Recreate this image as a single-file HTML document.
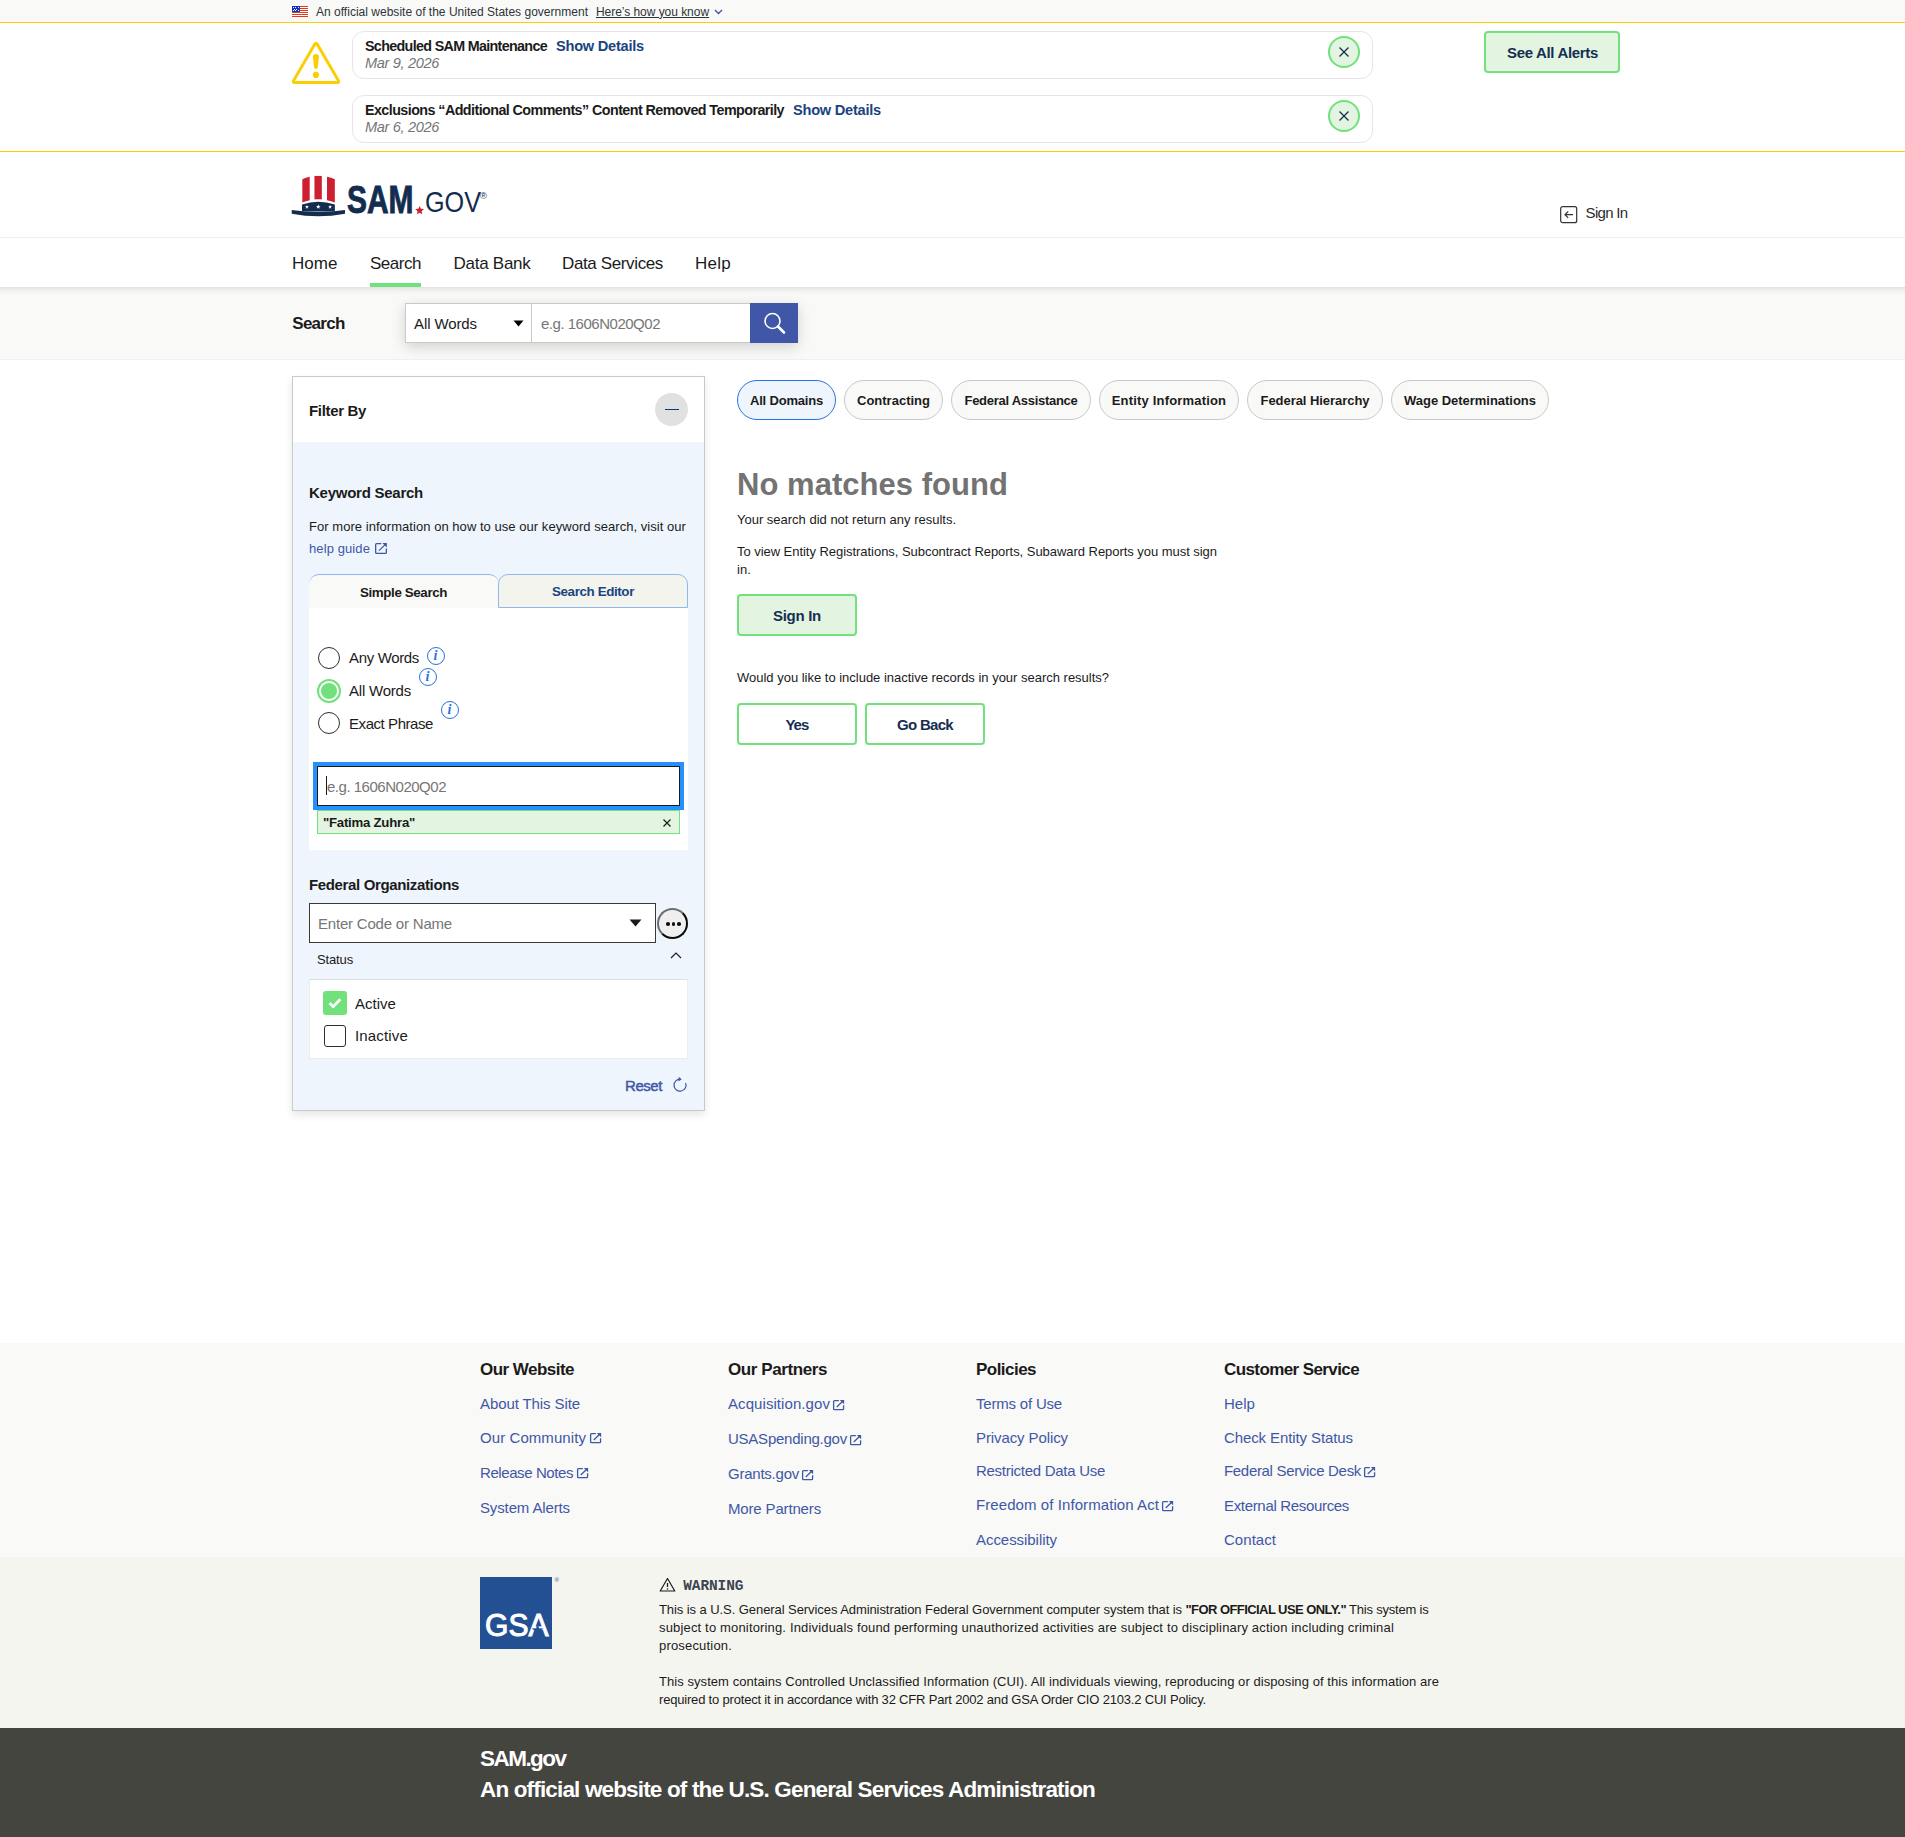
<!DOCTYPE html>
<html lang="en"><head><meta charset="utf-8"><title>SAM.gov | Search</title>
<style>
html,body{margin:0;padding:0;}
body{width:1905px;height:1837px;position:relative;overflow:hidden;background:#fff;font-family:"Liberation Sans", sans-serif;color:#1b1b1b;}
body *{position:absolute;box-sizing:border-box;margin:0;padding:0;}
.g{display:contents;}
a{color:inherit;text-decoration:none;}
h1,h2,h3,h4{font-weight:400;}
button{border:0;background:none;font:inherit;color:inherit;}
ul{list-style:none;}
.t{white-space:pre;line-height:1;display:block;}
svg{display:block;overflow:visible;}
</style></head>
<body>
<section class="g" aria-label="Official government website">
<div style="left:0px;top:0px;width:1905px;height:22px;background:#f9f9f7;"></div>
<svg aria-hidden="true" style="left:292px;top:6px;shape-rendering:crispEdges;" width="16" height="11" viewBox="0 0 16 11"><rect width="16" height="11" fill="#fff"/><rect y="0" width="16" height="1" fill="#e03c1c"/><rect y="2" width="16" height="1" fill="#e03c1c"/><rect y="4" width="16" height="1" fill="#e03c1c"/><rect y="6" width="16" height="1" fill="#e03c1c"/><rect y="8" width="16" height="1" fill="#e03c1c"/><rect y="10" width="16" height="1" fill="#e03c1c"/><rect width="7.6" height="6" fill="#1c2fb8"/><rect x="1" y="0.8" width="1" height="1" fill="#fff"/><rect x="3.3" y="0.8" width="1" height="1" fill="#fff"/><rect x="5.6" y="0.8" width="1" height="1" fill="#fff"/><rect x="2.1" y="2.5" width="1" height="1" fill="#fff"/><rect x="4.4" y="2.5" width="1" height="1" fill="#fff"/><rect x="1" y="4.2" width="1" height="1" fill="#fff"/><rect x="3.3" y="4.2" width="1" height="1" fill="#fff"/><rect x="5.6" y="4.2" width="1" height="1" fill="#fff"/></svg>
<p class="t" style="left:316px;top:5.84px;font-size:12px;color:#2f3338;letter-spacing:0.014px;">An official website of the United States government</p>
<button class="t" type="button" style="left:596px;top:5.84px;font-size:12px;color:#2f3338;text-decoration:underline;letter-spacing:-0.044px;">Here’s how you know</button>
<svg aria-hidden="true" style="left:714px;top:9px;" width="9" height="6" viewBox="0 0 9 6"><path d="M1 1L4.5 4.5L8 1" fill="none" stroke="#3f57a6" stroke-width="1.4"/></svg>
<div style="left:0px;top:22px;width:1905px;height:1px;background:#face00;"></div>
</section>
<section class="g" aria-label="Site alerts">
<svg aria-hidden="true" style="left:285px;top:35px;" width="60" height="55" viewBox="0 0 60 55"><path d="M31 9.6L52.3 46.3H9.7Z" fill="#face00" stroke="#face00" stroke-width="5.6" stroke-linejoin="round"/><path d="M31 10L51.95 46.1H10.05Z" fill="#fff"/><path d="M27.9 22A3 3 0 0 1 33.9 22L32.7 32.2A1.8 1.8 0 0 1 29.1 32.2Z" fill="#face00"/><circle cx="30.9" cy="39.9" r="3.1" fill="#face00"/></svg>
<article class="g">
<div style="left:352px;top:31px;width:1021px;height:48px;border:1px solid #e6e6e6;border-radius:12px;background:#fff;"></div>
<h3 class="t" style="left:365px;top:38.90px;font-size:14.3px;font-weight:700;letter-spacing:-0.664px;">Scheduled SAM Maintenance</h3>
<a class="t" style="left:556px;top:38.64px;font-size:14.6px;font-weight:700;color:#1a4480;letter-spacing:-0.236px;">Show Details</a>
<time class="t" style="left:365px;top:56.14px;font-size:14.6px;color:#71767a;font-style:italic;letter-spacing:-0.354px;">Mar 9, 2026</time>
<button type="button" aria-label="Dismiss alert" style="left:1328px;top:36px;width:32px;height:32px;border:2px solid #70e17b;border-radius:50%;background:#e3f5e1;"></button>
<svg aria-hidden="true" style="left:1339px;top:47px;" width="10" height="10" viewBox="0 0 10 10"><path d="M0.5 0.5L9.5 9.5M9.5 0.5L0.5 9.5" stroke="#162e51" stroke-width="1.3"/></svg>
</article>
<article class="g">
<div style="left:352px;top:95px;width:1021px;height:48px;border:1px solid #e6e6e6;border-radius:12px;background:#fff;"></div>
<h3 class="t" style="left:365px;top:102.90px;font-size:14.3px;font-weight:700;letter-spacing:-0.559px;">Exclusions “Additional Comments” Content Removed Temporarily</h3>
<a class="t" style="left:793px;top:102.64px;font-size:14.6px;font-weight:700;color:#1a4480;letter-spacing:-0.236px;">Show Details</a>
<time class="t" style="left:365px;top:120.14px;font-size:14.6px;color:#71767a;font-style:italic;letter-spacing:-0.354px;">Mar 6, 2026</time>
<button type="button" aria-label="Dismiss alert" style="left:1328px;top:100px;width:32px;height:32px;border:2px solid #70e17b;border-radius:50%;background:#e3f5e1;"></button>
<svg aria-hidden="true" style="left:1339px;top:111px;" width="10" height="10" viewBox="0 0 10 10"><path d="M0.5 0.5L9.5 9.5M9.5 0.5L0.5 9.5" stroke="#162e51" stroke-width="1.3"/></svg>
</article>
<button type="button" aria-label="See All Alerts" style="left:1484px;top:31px;width:136px;height:42px;border:2px solid #70e17b;border-radius:4px;background:#e3f5e1;"></button>
<span class="t" style="left:1507px;top:45.30px;font-size:15px;font-weight:700;color:#162e51;letter-spacing:-0.329px;">See All Alerts</span>
<div style="left:0px;top:151px;width:1905px;height:1px;background:#face00;"></div>
</section>
<header class="g">
<svg aria-hidden="true" style="left:286px;top:168px;" width="210" height="56" viewBox="0 0 210 56"><g transform="scale(0.11024)"><path d="M148,102Q180,86 215,80V292Q180,298 148,312Z" fill="#cc2030"/><path d="M258,72H325V284H258Z" fill="#cc2030"/><path d="M372,80Q410,86 443,102V312Q410,298 372,292Z" fill="#cc2030"/><path d="M145,330Q293,282 443,330V395H145Z" fill="#132d50"/><path d="M52,380Q293,416 535,380V414Q293,460 52,414Z" fill="#132d50"/><path d="M190.0,335.0L194.5,347.9L208.1,348.1L197.2,356.3L201.2,369.4L190.0,361.6L178.8,369.4L182.8,356.3L171.9,348.1L185.5,347.9ZM293.0,329.0L298.4,344.6L314.9,344.9L301.7,354.8L306.5,370.6L293.0,361.2L279.5,370.6L284.3,354.8L271.1,344.9L287.6,344.6ZM400.0,335.0L404.5,347.9L418.1,348.1L407.2,356.3L411.2,369.4L400.0,361.6L388.8,369.4L392.8,356.3L381.9,348.1L395.5,347.9Z" fill="#fff"/><path d="M1212.0,344.0L1223.2,370.6L1251.9,373.0L1230.1,391.9L1236.7,420.0L1212.0,405.0L1187.3,420.0L1193.9,391.9L1172.1,373.0L1200.8,370.6Z" fill="#cc2030"/></g></svg>
<span class="t" style="left:347px;top:180.53px;font-size:38px;font-weight:700;color:#132d50;-webkit-text-stroke:0.9px #132d50;transform:scaleX(0.7874);transform-origin:0 0;">SAM</span>
<span class="t" style="left:425px;top:188.15px;font-size:29px;color:#132d50;transform:scaleX(0.8686);transform-origin:0 0;">GOV</span>
<span class="t" style="left:480.3px;top:191.98px;font-size:9px;color:#132d50;transform:scaleX(1.0541);transform-origin:0 0;">®</span>
<svg aria-hidden="true" style="left:1560px;top:206px;" width="18" height="18" viewBox="0 0 18 18"><rect x="0.7" y="0.7" width="16" height="16" rx="2" fill="none" stroke="#333" stroke-width="1.2"/><path d="M13 8.7H5M8.2 5.5L5 8.7L8.2 11.9" fill="none" stroke="#333" stroke-width="1.2"/></svg>
<a class="t" style="left:1585.6px;top:205.30px;font-size:15px;color:#2a2a2a;letter-spacing:-0.700px;">Sign In</a>
<div style="left:0px;top:237px;width:1905px;height:1px;background:#f0f0f0;"></div>
<nav class="g" aria-label="Primary">
<a class="t" style="left:292px;top:254.61px;font-size:17px;letter-spacing:0.035px;">Home</a>
<a class="t" style="left:370px;top:254.61px;font-size:17px;letter-spacing:-0.479px;">Search</a>
<a class="t" style="left:453.5px;top:254.61px;font-size:17px;letter-spacing:-0.266px;">Data Bank</a>
<a class="t" style="left:562px;top:254.61px;font-size:17px;letter-spacing:-0.371px;">Data Services</a>
<a class="t" style="left:695px;top:254.61px;font-size:17px;letter-spacing:0.258px;">Help</a>
<div style="left:370px;top:283px;width:51px;height:4px;background:#70e17b;"></div>
</nav>
</header>
<form class="g" role="search">
<div style="left:0px;top:287px;width:1905px;height:72px;background:#f9f9f7;box-shadow:inset 0 8px 8px -8px rgba(0,0,0,.18);"></div>
<div style="left:0px;top:359px;width:1905px;height:1px;background:#f0f0f0;"></div>
<label class="t" style="left:292.3px;top:314.61px;font-size:17px;font-weight:700;letter-spacing:-0.734px;">Search</label>
<div style="left:405px;top:303px;width:393px;height:40px;box-shadow:0 4px 14px rgba(0,0,0,.16);background:#fff;"></div>
<div style="left:405px;top:303px;width:127px;height:40px;border:1px solid #c9c9c9;background:#fff;"></div>
<span class="t" style="left:414px;top:316.30px;font-size:15px;letter-spacing:-0.101px;">All Words</span>
<svg aria-hidden="true" style="left:513px;top:320px;" width="11" height="7" viewBox="0 0 11 7"><path d="M0.5 0.5H10.5L5.5 6.5Z" fill="#000"/></svg>
<div style="left:531px;top:303px;width:220px;height:40px;border:1px solid #c9c9c9;background:#fff;"></div>
<span class="t" style="left:541px;top:316.30px;font-size:15px;color:#767676;letter-spacing:-0.486px;">e.g. 1606N020Q02</span>
<button type="button" aria-label="Search" style="left:750px;top:303px;width:48px;height:40px;background:#3f57a6;"></button>
<svg aria-hidden="true" style="left:762px;top:311px;" width="24" height="24" viewBox="0 0 24 24"><circle cx="10.5" cy="10" r="7.5" fill="none" stroke="#fff" stroke-width="1.6"/><path d="M16 15.5L22 21.5" stroke="#fff" stroke-width="2.6" stroke-linecap="round"/></svg>
</form>
<main class="g">
<aside class="g" aria-label="Filters">
<div style="left:292px;top:376px;width:413px;height:735px;border:1px solid #c9c9c9;background:#eef5fc;box-shadow:0 4px 8px rgba(0,0,0,.10);"></div>
<div style="left:293px;top:377px;width:411px;height:65px;background:#fff;"></div>
<h2 class="t" style="left:309px;top:403.30px;font-size:15px;font-weight:700;letter-spacing:-0.335px;">Filter By</h2>
<button type="button" aria-label="Collapse filters" style="left:655px;top:393px;width:33px;height:33px;border-radius:50%;background:#e1e1e1;"></button>
<div style="left:665px;top:408.5px;width:14px;height:1.4px;background:#123a70;"></div>
<h3 class="t" style="left:309px;top:485.00px;font-size:15px;font-weight:700;letter-spacing:-0.253px;">Keyword Search</h3>
<p class="t" style="left:309px;top:520.00px;font-size:13px;letter-spacing:0.042px;">For more information on how to use our keyword search, visit our</p>
<a class="t" style="left:309px;top:542.00px;font-size:13px;color:#3f57a6;letter-spacing:0.100px;">help guide</a>
<svg aria-hidden="true" style="left:375.1px;top:543px;" width="12" height="12" viewBox="0 0 12 12"><path d="M6.3 .65H1.6Q.65 .65 .65 1.6V9.4Q.65 10.35 1.6 10.35H10.4Q11.35 10.35 11.35 9.4V5.6" fill="none" stroke="#3f57a6" stroke-width="1.3"/><path d="M4 7.6L10.4 1.4" fill="none" stroke="#3f57a6" stroke-width="1.3"/><path d="M7.3 0H11.9V4.6Z" fill="#3f57a6"/></svg>
<div style="left:309px;top:574px;width:190px;height:34px;border-top:1px solid #8fb8ee;border-radius:10px 10px 0 0;background:#f9f9f7;"></div>
<div style="left:498px;top:574px;width:190px;height:34px;border:1px solid #8fb8ee;border-radius:10px 10px 0 0;background:#f4f4ef;"></div>
<span class="t" style="left:360px;top:585.66px;font-size:13.4px;font-weight:700;letter-spacing:-0.407px;">Simple Search</span>
<span class="t" style="left:552px;top:584.66px;font-size:13.4px;font-weight:700;color:#1a4480;letter-spacing:-0.391px;">Search Editor</span>
<div style="left:309px;top:608px;width:379px;height:242px;background:#fff;"></div>
<div style="left:318px;top:647px;width:22px;height:22px;border-radius:50%;border:1.5px solid #2e2e2a;background:#fff;"></div>
<label class="t" style="left:349px;top:650.30px;font-size:15px;letter-spacing:-0.344px;">Any Words</label>
<div style="left:427px;top:647px;width:18px;height:18px;border-radius:50%;border:1.5px solid #2672de;"></div>
<span class="t" style="left:433.6px;top:648.95px;font-size:14px;font-weight:700;color:#2672de;font-style:italic;font-family:'Liberation Serif',serif;">i</span>
<div style="left:317px;top:679px;width:24px;height:24px;border-radius:50%;background:#70e17b;"></div>
<div style="left:319px;top:681px;width:20px;height:20px;border-radius:50%;background:#fff;"></div>
<div style="left:321px;top:683px;width:16px;height:16px;border-radius:50%;background:#70e17b;"></div>
<label class="t" style="left:349px;top:683.30px;font-size:15px;letter-spacing:-0.212px;">All Words</label>
<div style="left:419px;top:668px;width:18px;height:18px;border-radius:50%;border:1.5px solid #2672de;"></div>
<span class="t" style="left:425.6px;top:669.95px;font-size:14px;font-weight:700;color:#2672de;font-style:italic;font-family:'Liberation Serif',serif;">i</span>
<div style="left:318px;top:712px;width:22px;height:22px;border-radius:50%;border:1.5px solid #2e2e2a;background:#fff;"></div>
<label class="t" style="left:349px;top:716.30px;font-size:15px;letter-spacing:-0.435px;">Exact Phrase</label>
<div style="left:441px;top:701px;width:18px;height:18px;border-radius:50%;border:1.5px solid #2672de;"></div>
<span class="t" style="left:447.6px;top:702.95px;font-size:14px;font-weight:700;color:#2672de;font-style:italic;font-family:'Liberation Serif',serif;">i</span>
<div style="left:313px;top:762px;width:371px;height:48px;background:#2491ff;"></div>
<div style="left:317px;top:766px;width:363px;height:40px;border:1px solid #1b1b1b;background:#fff;"></div>
<div style="left:326px;top:776px;width:1px;height:19px;background:#1b1b1b;"></div>
<span class="t" style="left:327px;top:779.30px;font-size:15px;color:#767676;letter-spacing:-0.486px;">e.g. 1606N020Q02</span>
<div style="left:317px;top:810px;width:363px;height:24px;border:1px solid #70e17b;background:#e3f5e1;"></div>
<span class="t" style="left:323px;top:815.83px;font-size:13.2px;font-weight:700;letter-spacing:-0.237px;">"Fatima Zuhra"</span>
<svg aria-hidden="true" style="left:663px;top:819px;" width="8" height="8" viewBox="0 0 8 8"><path d="M0.5 0.5L7.5 7.5M7.5 0.5L0.5 7.5" stroke="#1b1b1b" stroke-width="1.2"/></svg>
<h3 class="t" style="left:309px;top:877.30px;font-size:15px;font-weight:700;letter-spacing:-0.359px;">Federal Organizations</h3>
<div style="left:309px;top:903px;width:347px;height:40px;border:1px solid #3a3a35;background:#fff;"></div>
<span class="t" style="left:318px;top:916.30px;font-size:15px;color:#767676;letter-spacing:-0.199px;">Enter Code or Name</span>
<svg aria-hidden="true" style="left:629px;top:919px;" width="13" height="8" viewBox="0 0 13 8"><path d="M0.5 0.5H12.5L6.5 7.5Z" fill="#1b1b1b"/></svg>
<div style="left:657px;top:908px;width:31px;height:31px;border-radius:50%;border:2px solid;border-color:#6e6e6e #0a0a0a #0a0a0a #6e6e6e;background:#efefef;"></div>
<div style="left:666px;top:922.4px;width:3.6px;height:3.6px;border-radius:50%;background:#111;"></div>
<div style="left:671.7px;top:922.4px;width:3.6px;height:3.6px;border-radius:50%;background:#111;"></div>
<div style="left:677.4px;top:922.4px;width:3.6px;height:3.6px;border-radius:50%;background:#111;"></div>
<h3 class="t" style="left:317px;top:953.00px;font-size:13px;letter-spacing:-0.143px;">Status</h3>
<svg aria-hidden="true" style="left:670px;top:951px;" width="12" height="8" viewBox="0 0 12 8"><path d="M1 7L6 2L11 7" fill="none" stroke="#1b1b1b" stroke-width="1.2"/></svg>
<div style="left:309px;top:979px;width:379px;height:80px;background:#fff;border:1px solid #ececec;border-top:1px solid #dcdee0;"></div>
<div style="left:323px;top:991px;width:24px;height:24px;background:#70e17b;border-radius:3px;"></div>
<svg aria-hidden="true" style="left:328px;top:997px;" width="14" height="12" viewBox="0 0 14 12"><path d="M1.5 6L5.2 9.6L12.3 2.2" fill="none" stroke="#fff" stroke-width="2.8"/></svg>
<label class="t" style="left:355px;top:996.30px;font-size:15px;letter-spacing:0.023px;">Active</label>
<div style="left:324px;top:1025px;width:22px;height:22px;border:1.5px solid #2e2e2a;border-radius:3px;background:#fff;"></div>
<label class="t" style="left:355px;top:1028.30px;font-size:15px;letter-spacing:0.162px;">Inactive</label>
<button class="t" type="button" style="left:625px;top:1078.30px;font-size:15px;color:#3f57a6;-webkit-text-stroke:0.45px #3f57a6;letter-spacing:-0.438px;">Reset</button>
<svg aria-hidden="true" style="left:671px;top:1076px;" width="17" height="17" viewBox="0 0 17 17"><path d="M9.5 3.2A6 6 0 1 0 14.6 7" fill="none" stroke="#3f57a6" stroke-width="1.2"/><path d="M7.6 0.8L10.6 3.3L7.6 5.6Z" fill="#3f57a6"/></svg>
</aside>
<section class="g" aria-label="Search results">
<button type="button" aria-pressed="true" style="left:737px;top:380px;width:99px;height:40px;border:1px solid #2672de;border-radius:20px;background:#eef5fc;"></button>
<span class="t" style="left:750.0px;top:394.00px;font-size:13px;font-weight:700;letter-spacing:-0.193px;">All Domains</span>
<button type="button" style="left:844px;top:380px;width:99px;height:40px;border:1px solid #c9c9c9;border-radius:20px;background:#f9f9f7;"></button>
<span class="t" style="left:857.0px;top:394.00px;font-size:13px;font-weight:700;letter-spacing:0.004px;">Contracting</span>
<button type="button" style="left:951px;top:380px;width:140px;height:40px;border:1px solid #c9c9c9;border-radius:20px;background:#f9f9f7;"></button>
<span class="t" style="left:964.5px;top:394.00px;font-size:13px;font-weight:700;letter-spacing:-0.280px;">Federal Assistance</span>
<button type="button" style="left:1099px;top:380px;width:140px;height:40px;border:1px solid #c9c9c9;border-radius:20px;background:#f9f9f7;"></button>
<span class="t" style="left:1111.75px;top:394.00px;font-size:13px;font-weight:700;letter-spacing:0.182px;">Entity Information</span>
<button type="button" style="left:1247px;top:380px;width:136px;height:40px;border:1px solid #c9c9c9;border-radius:20px;background:#f9f9f7;"></button>
<span class="t" style="left:1260.5px;top:394.00px;font-size:13px;font-weight:700;letter-spacing:-0.050px;">Federal Hierarchy</span>
<button type="button" style="left:1391px;top:380px;width:158px;height:40px;border:1px solid #c9c9c9;border-radius:20px;background:#f9f9f7;"></button>
<span class="t" style="left:1404.0px;top:394.00px;font-size:13px;font-weight:700;letter-spacing:-0.023px;">Wage Determinations</span>
<h1 class="t" style="left:737px;top:468.76px;font-size:31px;font-weight:700;color:#737373;letter-spacing:0.037px;">No matches found</h1>
<p class="t" style="left:737px;top:513.00px;font-size:13px;letter-spacing:-0.005px;">Your search did not return any results.</p>
<span class="t" style="left:737px;top:545.00px;font-size:13px;letter-spacing:-0.042px;">To view Entity Registrations, Subcontract Reports, Subaward Reports you must sign</span>
<span class="t" style="left:737px;top:563.00px;font-size:13px;letter-spacing:0.089px;">in.</span>
<button type="button" style="left:737px;top:594px;width:120px;height:42px;border:2px solid #70e17b;border-radius:4px;background:#e3f5e1;"></button>
<span class="t" style="left:773px;top:608.30px;font-size:15px;font-weight:700;color:#162e51;letter-spacing:-0.286px;">Sign In</span>
<p class="t" style="left:737px;top:671.00px;font-size:13px;letter-spacing:-0.009px;">Would you like to include inactive records in your search results?</p>
<button type="button" style="left:737px;top:703px;width:120px;height:42px;border:2px solid #70e17b;border-radius:4px;background:#fff;"></button>
<span class="t" style="left:785.4px;top:717.30px;font-size:15px;font-weight:700;color:#162e51;letter-spacing:-0.958px;">Yes</span>
<button type="button" style="left:865px;top:703px;width:120px;height:42px;border:2px solid #70e17b;border-radius:4px;background:#fff;"></button>
<span class="t" style="left:897px;top:717.30px;font-size:15px;font-weight:700;color:#162e51;letter-spacing:-0.694px;">Go Back</span>
</section>
</main>
<footer class="g">
<div style="left:0px;top:1343px;width:1905px;height:214px;background:#f9f9f7;"></div>
<div style="left:0px;top:1557px;width:1905px;height:171px;background:#f5f5f0;"></div>
<div style="left:0px;top:1728px;width:1905px;height:109px;background:#454540;"></div>
<section class="g">
<h2 class="t" style="left:480px;top:1360.61px;font-size:17px;font-weight:700;letter-spacing:-0.530px;">Our Website</h2>
<ul class="g">
<li class="g">
<a class="t" style="left:480px;top:1396.30px;font-size:15px;color:#3f57a6;letter-spacing:-0.097px;">About This Site</a>
</li>
<li class="g">
<a class="t" style="left:480px;top:1430.30px;font-size:15px;color:#3f57a6;letter-spacing:0.075px;">Our Community</a>
<svg aria-hidden="true" style="left:589.9px;top:1432.6px;" width="11.2" height="11.2" viewBox="0 0 12 12"><path d="M6.3 .65H1.6Q.65 .65 .65 1.6V9.4Q.65 10.35 1.6 10.35H10.4Q11.35 10.35 11.35 9.4V5.6" fill="none" stroke="#3f57a6" stroke-width="1.4"/><path d="M4 7.6L10.4 1.4" fill="none" stroke="#3f57a6" stroke-width="1.4"/><path d="M7.3 0H11.9V4.6Z" fill="#3f57a6"/></svg>
</li>
<li class="g">
<a class="t" style="left:480px;top:1465.30px;font-size:15px;color:#3f57a6;letter-spacing:-0.415px;">Release Notes</a>
<svg aria-hidden="true" style="left:576.9px;top:1467.6px;" width="11.2" height="11.2" viewBox="0 0 12 12"><path d="M6.3 .65H1.6Q.65 .65 .65 1.6V9.4Q.65 10.35 1.6 10.35H10.4Q11.35 10.35 11.35 9.4V5.6" fill="none" stroke="#3f57a6" stroke-width="1.4"/><path d="M4 7.6L10.4 1.4" fill="none" stroke="#3f57a6" stroke-width="1.4"/><path d="M7.3 0H11.9V4.6Z" fill="#3f57a6"/></svg>
</li>
<li class="g">
<a class="t" style="left:480px;top:1500.30px;font-size:15px;color:#3f57a6;letter-spacing:-0.131px;">System Alerts</a>
</li>
</ul>
</section>
<section class="g">
<h2 class="t" style="left:728px;top:1360.61px;font-size:17px;font-weight:700;letter-spacing:-0.411px;">Our Partners</h2>
<ul class="g">
<li class="g">
<a class="t" style="left:728px;top:1396.30px;font-size:15px;color:#3f57a6;letter-spacing:0.073px;">Acquisition.gov</a>
<svg aria-hidden="true" style="left:833.4px;top:1399.7px;" width="11.2" height="11.2" viewBox="0 0 12 12"><path d="M6.3 .65H1.6Q.65 .65 .65 1.6V9.4Q.65 10.35 1.6 10.35H10.4Q11.35 10.35 11.35 9.4V5.6" fill="none" stroke="#3f57a6" stroke-width="1.4"/><path d="M4 7.6L10.4 1.4" fill="none" stroke="#3f57a6" stroke-width="1.4"/><path d="M7.3 0H11.9V4.6Z" fill="#3f57a6"/></svg>
</li>
<li class="g">
<a class="t" style="left:728px;top:1431.30px;font-size:15px;color:#3f57a6;letter-spacing:-0.240px;">USASpending.gov</a>
<svg aria-hidden="true" style="left:850.4px;top:1434.7px;" width="11.2" height="11.2" viewBox="0 0 12 12"><path d="M6.3 .65H1.6Q.65 .65 .65 1.6V9.4Q.65 10.35 1.6 10.35H10.4Q11.35 10.35 11.35 9.4V5.6" fill="none" stroke="#3f57a6" stroke-width="1.4"/><path d="M4 7.6L10.4 1.4" fill="none" stroke="#3f57a6" stroke-width="1.4"/><path d="M7.3 0H11.9V4.6Z" fill="#3f57a6"/></svg>
</li>
<li class="g">
<a class="t" style="left:728px;top:1466.30px;font-size:15px;color:#3f57a6;letter-spacing:-0.237px;">Grants.gov</a>
<svg aria-hidden="true" style="left:802.4px;top:1469.7px;" width="11.2" height="11.2" viewBox="0 0 12 12"><path d="M6.3 .65H1.6Q.65 .65 .65 1.6V9.4Q.65 10.35 1.6 10.35H10.4Q11.35 10.35 11.35 9.4V5.6" fill="none" stroke="#3f57a6" stroke-width="1.4"/><path d="M4 7.6L10.4 1.4" fill="none" stroke="#3f57a6" stroke-width="1.4"/><path d="M7.3 0H11.9V4.6Z" fill="#3f57a6"/></svg>
</li>
<li class="g">
<a class="t" style="left:728px;top:1501.30px;font-size:15px;color:#3f57a6;letter-spacing:-0.157px;">More Partners</a>
</li>
</ul>
</section>
<section class="g">
<h2 class="t" style="left:976px;top:1360.61px;font-size:17px;font-weight:700;letter-spacing:-0.533px;">Policies</h2>
<ul class="g">
<li class="g">
<a class="t" style="left:976px;top:1396.30px;font-size:15px;color:#3f57a6;letter-spacing:-0.197px;">Terms of Use</a>
</li>
<li class="g">
<a class="t" style="left:976px;top:1430.30px;font-size:15px;color:#3f57a6;letter-spacing:-0.097px;">Privacy Policy</a>
</li>
<li class="g">
<a class="t" style="left:976px;top:1463.30px;font-size:15px;color:#3f57a6;letter-spacing:-0.275px;">Restricted Data Use</a>
</li>
<li class="g">
<a class="t" style="left:976px;top:1497.30px;font-size:15px;color:#3f57a6;letter-spacing:0.080px;">Freedom of Information Act</a>
<svg aria-hidden="true" style="left:1162.4px;top:1500.7px;" width="11.2" height="11.2" viewBox="0 0 12 12"><path d="M6.3 .65H1.6Q.65 .65 .65 1.6V9.4Q.65 10.35 1.6 10.35H10.4Q11.35 10.35 11.35 9.4V5.6" fill="none" stroke="#3f57a6" stroke-width="1.4"/><path d="M4 7.6L10.4 1.4" fill="none" stroke="#3f57a6" stroke-width="1.4"/><path d="M7.3 0H11.9V4.6Z" fill="#3f57a6"/></svg>
</li>
<li class="g">
<a class="t" style="left:976px;top:1532.30px;font-size:15px;color:#3f57a6;letter-spacing:-0.053px;">Accessibility</a>
</li>
</ul>
</section>
<section class="g">
<h2 class="t" style="left:1224px;top:1360.61px;font-size:17px;font-weight:700;letter-spacing:-0.599px;">Customer Service</h2>
<ul class="g">
<li class="g">
<a class="t" style="left:1224px;top:1396.30px;font-size:15px;color:#3f57a6;letter-spacing:0.035px;">Help</a>
</li>
<li class="g">
<a class="t" style="left:1224px;top:1430.30px;font-size:15px;color:#3f57a6;letter-spacing:-0.100px;">Check Entity Status</a>
</li>
<li class="g">
<a class="t" style="left:1224px;top:1463.30px;font-size:15px;color:#3f57a6;letter-spacing:-0.320px;">Federal Service Desk</a>
<svg aria-hidden="true" style="left:1364.4px;top:1466.7px;" width="11.2" height="11.2" viewBox="0 0 12 12"><path d="M6.3 .65H1.6Q.65 .65 .65 1.6V9.4Q.65 10.35 1.6 10.35H10.4Q11.35 10.35 11.35 9.4V5.6" fill="none" stroke="#3f57a6" stroke-width="1.4"/><path d="M4 7.6L10.4 1.4" fill="none" stroke="#3f57a6" stroke-width="1.4"/><path d="M7.3 0H11.9V4.6Z" fill="#3f57a6"/></svg>
</li>
<li class="g">
<a class="t" style="left:1224px;top:1497.90px;font-size:15px;color:#3f57a6;letter-spacing:-0.328px;">External Resources</a>
</li>
<li class="g">
<a class="t" style="left:1224px;top:1532.30px;font-size:15px;color:#3f57a6;letter-spacing:0.042px;">Contact</a>
</li>
</ul>
</section>
<div style="left:480px;top:1577px;width:72px;height:72px;background:#234f93;"></div>
<span class="t" style="left:484.5px;top:1611.01px;font-size:30.7px;color:#fff;-webkit-text-stroke:1px #fff;transform:scaleX(0.9797);transform-origin:0 0;">GSA</span>
<svg aria-hidden="true" style="left:528px;top:1620px;" width="20" height="20" viewBox="0 0 20 20"><path d="M9.6,4.1L11.1,8.3L15.5,8.4L12.0,11.1L13.2,15.3L9.6,12.8L6.0,15.3L7.2,11.1L3.7,8.4L8.1,8.3Z" fill="#234f93"/></svg>
<span class="t" style="left:554.5px;top:1577.42px;font-size:6px;color:#234f93;">®</span>
<svg aria-hidden="true" style="left:659px;top:1577.3px;" width="17" height="15" viewBox="0 0 17 15"><path d="M8.5 1.5L15.8 14H1.2Z" fill="none" stroke="#1b1b1b" stroke-width="1.2" stroke-linejoin="round"/><path d="M8.5 6V10" stroke="#1b1b1b" stroke-width="1.3"/><circle cx="8.5" cy="12" r=".8" fill="#1b1b1b"/></svg>
<h2 class="t" style="left:683.3px;top:1578.73px;font-size:14.5px;font-weight:700;color:#3d4551;font-family:'Liberation Mono', monospace;letter-spacing:-0.132px;">WARNING</h2>
<span class="t" style="left:659px;top:1603.00px;font-size:13px;letter-spacing:-0.074px;">This is a U.S. General Services Administration Federal Government computer system that is</span>
<span class="t" style="left:1185.5px;top:1603.00px;font-size:13px;font-weight:700;letter-spacing:-0.568px;">"FOR OFFICIAL USE ONLY."</span>
<span class="t" style="left:1349px;top:1603.00px;font-size:13px;letter-spacing:-0.203px;">This system is</span>
<span class="t" style="left:659px;top:1621.00px;font-size:13px;letter-spacing:0.163px;">subject to monitoring. Individuals found performing unauthorized activities are subject to disciplinary action including criminal</span>
<span class="t" style="left:659px;top:1639.00px;font-size:13px;letter-spacing:0.181px;">prosecution.</span>
<span class="t" style="left:659px;top:1675.00px;font-size:13px;letter-spacing:0.061px;">This system contains Controlled Unclassified Information (CUI). All individuals viewing, reproducing or disposing of this information are</span>
<span class="t" style="left:659px;top:1693.00px;font-size:13px;letter-spacing:-0.188px;">required to protect it in accordance with 32 CFR Part 2002 and GSA Order CIO 2103.2 CUI Policy.</span>
<p class="t" style="left:480px;top:1748.25px;font-size:22.5px;font-weight:700;color:#fff;letter-spacing:-1.538px;">SAM.gov</p>
<p class="t" style="left:480px;top:1779.25px;font-size:22.5px;font-weight:700;color:#fff;letter-spacing:-0.843px;">An official website of the U.S. General Services Administration</p>
</footer>
</body></html>
